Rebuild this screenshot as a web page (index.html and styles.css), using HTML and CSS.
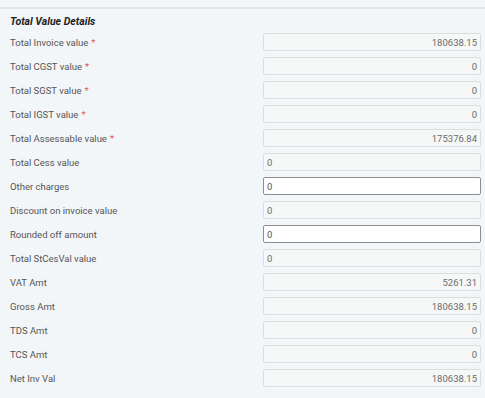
FILE: index.html
```html
<!DOCTYPE html>
<html>
<head>
<meta charset="utf-8">
<link rel="stylesheet" href="styles.css">
</head>
<body>
<div class="topband"></div>
<section class="panel">
  <h3 class="heading">Total Value Details</h3>
  <div class="form">
    <label class="lbl">Total Invoice value <span class="req">*</span></label>
    <input class="field ro num" value="180638.15" readonly>
    <label class="lbl">Total CGST value <span class="req">*</span></label>
    <input class="field ro num" value="0" readonly>
    <label class="lbl">Total SGST value <span class="req">*</span></label>
    <input class="field ro num" value="0" readonly>
    <label class="lbl">Total IGST value <span class="req">*</span></label>
    <input class="field ro num" value="0" readonly>
    <label class="lbl">Total Assessable value <span class="req">*</span></label>
    <input class="field ro num" value="175376.84" readonly>
    <label class="lbl">Total Cess value</label>
    <input class="field ro" value="0" readonly>
    <label class="lbl">Other charges</label>
    <input class="field edit" value="0">
    <label class="lbl">Discount on invoice value</label>
    <input class="field ro" value="0" readonly>
    <label class="lbl">Rounded off amount</label>
    <input class="field edit" value="0">
    <label class="lbl">Total StCesVal value</label>
    <input class="field ro" value="0" readonly>
    <label class="lbl">VAT Amt</label>
    <input class="field ro num" value="5261.31" readonly>
    <label class="lbl">Gross Amt</label>
    <input class="field ro num" value="180638.15" readonly>
    <label class="lbl">TDS Amt</label>
    <input class="field ro num" value="0" readonly>
    <label class="lbl">TCS Amt</label>
    <input class="field ro num" value="0" readonly>
    <label class="lbl">Net Inv Val</label>
    <input class="field ro num" value="180638.15" readonly>
  </div>
</section>
</body>
</html>
```
FILE: styles.css
```css
html, body {
  margin: 0;
  padding: 0;
  background: #f3f6f9;
  font-family: Roboto, "Liberation Sans", Arial, sans-serif;
}
.topband {
  height: 7px;
  border-bottom: 2px solid #e3e6ea;
}
.panel {
  padding: 6px 4px 0 10px;
}
.heading {
  margin: 0;
  font-size: 10.5px;
  line-height: 14px;
  font-weight: 700;
  font-style: italic;
  color: #222;
}
.form {
  margin-top: 4px;
  display: grid;
  grid-template-columns: 253px 218px;
  grid-auto-rows: 18px;
  row-gap: 6px;
}
.lbl {
  display: flex;
  align-items: center;
  gap: 3px;
  font-size: 9.5px;
  color: #555;
}
.req {
  color: #e4574f;
}
.field {
  box-sizing: border-box;
  width: 100%;
  height: 18px;
  margin: 0;
  padding: 0 3px;
  border-radius: 2px;
  font-family: Roboto, "Liberation Sans", Arial, sans-serif;
  font-size: 9.5px;
  outline: none;
}
.ro {
  background: #f6f7f7;
  border: 1px solid #dcdee0;
  color: #6c6c6c;
}
.edit {
  background: #fff;
  border: 1px solid #8e8e8e;
  color: #555;
}
.num {
  text-align: right;
}
```
